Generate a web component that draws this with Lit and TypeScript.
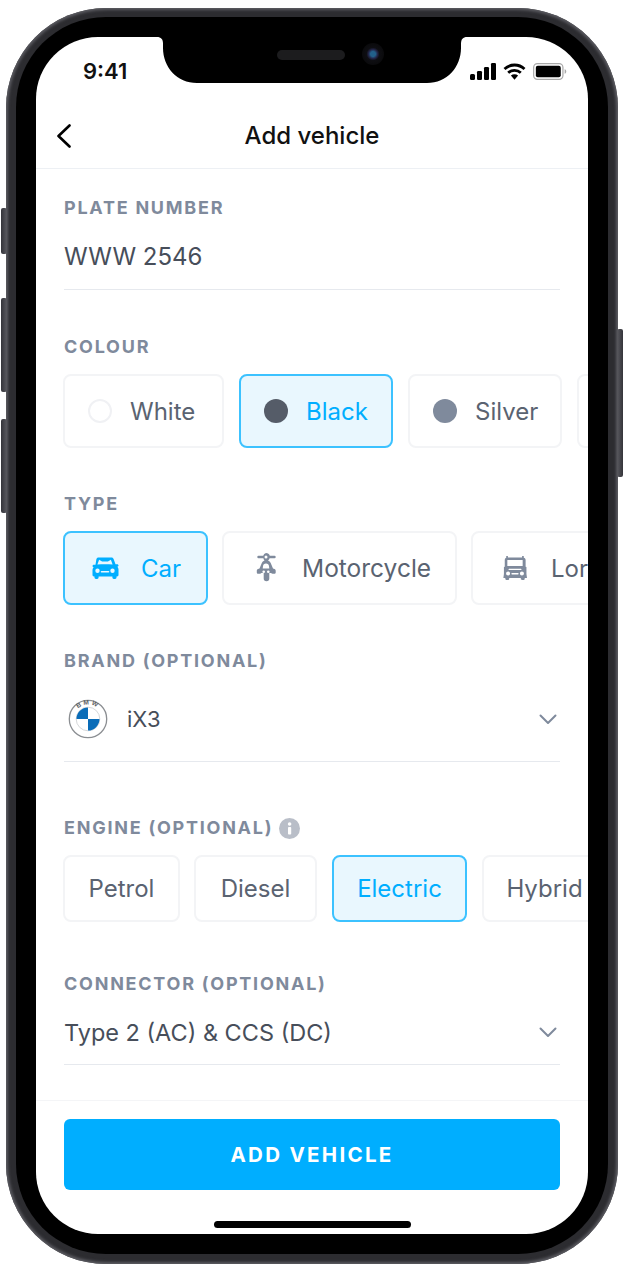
import { LitElement, html, css, svg } from "lit";
import { customElement } from "lit/decorators.js";

const car = svg`<svg class="ic" width="28" height="24" viewBox="0 0 28 24"><path fill="currentColor" fill-rule="evenodd" d="M7.500 1.500h13c1 0 1.800.6 2.100 1.500l1.900 5.300h1.700c.7 0 1.300.6 1.300 1.200s-.5 1.100-1.100 1.200c.7.8 1.100 1.700 1.100 2.800v5.500c0 .8-.6 1.400-1.400 1.400h-.6v1.100c0 .8-.6 1.400-1.400 1.400h-1.300c-.8 0-1.400-.6-1.400-1.400v-1.100H7.600v1.100c0 .8-.6 1.400-1.400 1.400H4.900c-.8 0-1.400-.6-1.400-1.400v-1.100h-.6c-.8 0-1.400-.6-1.400-1.400V14c0-1.100.4-2 1.100-2.800-.6-.1-1.100-.6-1.100-1.200s.6-1.200 1.300-1.200h1.700L5.400 3c.3-.9 1.100-1.500 2.100-1.500Zm.6 2.300L6.400 8.600c2.300-.2 4.900-.3 7.600-.3s5.300.1 7.600.3l-1.700-4.800-3 1.700h-5.800ZM6.500 12.500a2.200 2.200 0 1 0 0 4.400 2.200 2.200 0 0 0 0-4.400Zm15 0a2.200 2.200 0 1 0 0 4.400 2.200 2.200 0 0 0 0-4.400ZM10.500 15a.8.8 0 0 0 0 1.600h7a.8.8 0 0 0 0-1.600h-7Z"/></svg>`;

const moto = svg`<svg class="ic" width="22" height="30" viewBox="0 0 22 30"><path fill="currentColor" fill-rule="evenodd" d="M11 0a4 4 0 0 1 3.800 2.800h4.700a1.200 1.200 0 0 1 0 2.400h-4.900A4 4 0 0 1 13 7.500c1.300.4 2.200 1.300 2.700 2.500l2.300 5.500 1.500.5c.8.300 1.200 1 1.200 1.800v1.700c0 .7-.6 1.300-1.300 1.300h-1.800c-.6 0-1.200-.3-1.500-.8h-1.800v5.500a2.800 2.800 0 0 1-5.600 0v-5.500H6.400c-.3.500-.9.800-1.500.8H3.100c-.7 0-1.300-.6-1.300-1.300V17.800c0-.8.400-1.500 1.200-1.800l1.500-.5L6.800 10c.5-1.200 1.400-2.100 2.700-2.500a4 4 0 0 1-1.100-2.300H3.500a1.200 1.200 0 0 1 0-2.400h4.700A4 4 0 0 1 11 0Zm0 2.500a1.500 1.500 0 1 0 0 3 1.500 1.500 0 0 0 0-3Zm0 8a3 3 0 0 0-3 2.700l-.3 2.300h6.600l-.3-2.300a3 3 0 0 0-3-2.700Zm-2.300 7a1.300 1.300 0 1 0 0 2.600 1.300 1.300 0 0 0 0-2.600Zm4.600 0a1.300 1.300 0 1 0 0 2.600 1.300 1.300 0 0 0 0-2.600Z"/></svg>`;

const lorry = svg`<svg class="ic" width="24" height="24" viewBox="0 0 26 26"><path fill="currentColor" fill-rule="evenodd" d="M3.500 0h1.800v1.700h15.400V0h1.800v1.800c1.200.3 2 1.300 2 2.500v7.400l.9.300v7.500l.6 4.200H23.500v1.300c0 .5-.4 1-1 1h-2.200c-.6 0-1-.5-1-1v-1.300H6.700v1.300c0 .5-.4 1-1 1H3.500c-.6 0-1-.5-1-1v-1.300H.4l.6-4.200V12l.9-.3V4.300c0-1.200.8-2.200 1.600-2.500V0Zm1.200 4.300v6.600h16.600V4.300H4.700ZM7 13.700c-.5 0-1 .5-1 1v.6h14v-.6c0-.5-.5-1-1-1H7ZM5.500 16.800a2.200 2.200 0 1 0 0 4.400 2.200 2.200 0 0 0 0-4.400Zm15 0a2.200 2.200 0 1 0 0 4.400 2.200 2.200 0 0 0 0-4.400ZM9.800 18.500a.7.7 0 0 0 0 1.500h6.400a.7.7 0 0 0 0-1.500H9.800Z"/></svg>`;

const chevron = html`<svg class="chev" width="18" height="11" viewBox="0 0 18 11"><path d="M1.500 1.500 9 9l7.500-7.500" fill="none" stroke="#7f8a9c" stroke-width="2" stroke-linecap="round" stroke-linejoin="round"/></svg>`;

const bmw = svg`<svg class="logo" width="40" height="40" viewBox="0 0 40 40">
  <circle cx="20" cy="20" r="18.700" fill="#fff" stroke="#8b8e92" stroke-width="1.300"/>
  <circle cx="20" cy="20" r="11.800" fill="#fff" stroke="#b9bcc0" stroke-width=".6"/>
  <path d="M20 20V8.500A11.500 11.500 0 0 0 8.500 20H20Zm0 0v11.500A11.500 11.500 0 0 0 31.500 20H20Z" fill="#0a6cb8"/>
  <defs><path id="arc" d="M5.500 20a14.500 14.500 0 0 1 29 0"/></defs>
  <text font-family="Liberation Sans, sans-serif" font-size="6.500" font-weight="700" fill="#5b5f64" text-anchor="middle"><textPath href="#arc" startOffset="50%" letter-spacing="2">BMW</textPath></text>
</svg>`;

@customElement("app-root")
export class AppRoot extends LitElement {
  static styles = css`
    :host { display: block; width: 624px; height: 1272px; background: #fff; font-family: "Inter", "Noto Sans", sans-serif; overflow: hidden; }
    .stage { position: relative; width: 624px; height: 1272px; padding: 8px 6px; box-sizing: border-box; }
    .side { position: absolute; background: linear-gradient(90deg, #34343a, #5a5a60); border-radius: 2px; }
    .s1 { left: 1px; top: 208px; width: 6px; height: 46px; }
    .s2 { left: 1px; top: 298px; width: 6px; height: 94px; }
    .s3 { left: 1px; top: 419px; width: 6px; height: 94px; }
    .s4 { left: 617px; top: 329px; width: 6px; height: 148px; background: linear-gradient(90deg, #5a5a60, #34343a); }
    .metal { position: relative; width: 612px; height: 1256px; box-sizing: border-box; padding: 9px 10px 10px; border-radius: 100px; background: #2c2c30; box-shadow: inset 0 0 3px 2px #5c5c62; }
    .bezel { height: 1237px; box-sizing: border-box; padding: 20px; border-radius: 90px; background: #000; }
    .screen { position: relative; height: 1197px; border-radius: 62px; background: #fff; overflow: hidden; display: flex; flex-direction: column; }
    .notch { position: absolute; left: 121px; top: 0; }
    .speaker { position: absolute; left: 241px; top: 13px; width: 68px; height: 10px; border-radius: 5px; background: #1c1c1e; }
    .cam { position: absolute; left: 326px; top: 6px; width: 22px; height: 22px; border-radius: 50%; background: radial-gradient(circle at 50% 50%, #22608a 0 2.500px, #23264a 4.500px, #0e0e12 6.500px, #0a0a0c 11px); }
    .status { height: 66px; flex: none; box-sizing: border-box; padding: 23px 21px 0 47px; display: flex; justify-content: space-between; align-items: flex-start; }
    .time { font-size: 22px; font-weight: 600; line-height: 23px; color: #111; }
    .sicons { display: flex; align-items: center; gap: 7px; margin-top: 3px; }
    .nav { height: 65px; flex: none; border-bottom: 1px solid #edf0f4; position: relative; display: flex; align-items: center; justify-content: center; }
    .back { position: absolute; left: 20px; top: 21px; }
    .title { font-size: 24px; font-weight: 500; color: #111; line-height: 30px; }
    .body { flex: 1; padding: 27px 28px 0; min-height: 0; overflow: hidden; }
    .label { font-size: 18px; font-weight: 700; letter-spacing: 1.750px; line-height: 22px; padding-top: 1px; margin-bottom: -1px; color: #7f8a9c; display: flex; align-items: center; gap: 6px; }
    .mt45 { margin-top: 45px; } .mt44 { margin-top: 44px; } .mt54 { margin-top: 54px; } .mt50 { margin-top: 50px; }
    .field { display: flex; align-items: center; box-sizing: content-box; border-bottom: 1px solid #e6e9ee; color: #474e5a; font-size: 24px; }
    .plate { height: 66px; padding-top: 5px; }
    .brand { height: 84px; padding-top: 6px; gap: 19px; font-size: 22px; }
    .conn { height: 64px; padding-top: 6px; font-size: 23.500px; }
    .grow { flex: 1; }
    .chev { margin-right: 3px; }
    .logo { margin-left: 4px; }
    .chips { display: flex; gap: 15px; margin: 17px -28px 0 -1px; overflow: hidden; }
    .chips.tight { gap: 14px; }
    .chip { flex: none; box-sizing: border-box; height: 74px; display: flex; align-items: center; border: 2px solid #f3f4f6; border-radius: 8px; background: #fff; color: #5a6371; font-size: 24px; }
    .chip.on { background: #e9f7fe; border-color: #3cc2ff; color: #00aeff; }
    .dot { width: 24px; height: 24px; border-radius: 50%; flex: none; box-sizing: border-box; margin-right: 18px; }
    .d-white { border: 2px solid #f0f1f4; }
    .d-black { background: #555c68; }
    .d-silver { background: #7f8a9c; }
    .col { padding-left: 23px; }
    .w161 { width: 161px; } .w154 { width: 154px; } .w145 { width: 145px; } .w235 { width: 235px; } .w200 { width: 200px; }
    .ic { color: #7f8a9c; flex: none; }
    .on .ic { color: #00aeff; }
    .t-car { padding-left: 26px; gap: 22px; }
    .t-moto { padding-left: 31px; gap: 25px; font-size: 24.500px; }
    .t-lorry { padding-left: 30px; gap: 24px; }
    .eng { height: 67px; justify-content: center; }
    .e1 { width: 117px; margin-right: -1px; } .e2 { width: 123px; } .e3 { width: 135px; } .e4 { width: 125px; }
    .info { width: 21px; height: 21px; flex: none; }
    .footer { flex: none; height: 134px; box-sizing: border-box; border-top: 1px solid #f4f5f7; padding: 18px 28px 0; display: flex; flex-direction: column; align-items: center; }
    .cta { width: 100%; height: 71px; flex: none; border: none; border-radius: 6px; background: #00aeff; color: #fff; font: 700 20.500px "Inter", sans-serif; letter-spacing: 2.300px; }
    .home { width: 197px; height: 7px; flex: none; margin-top: 31px; border-radius: 4px; background: #000; }
  `;

  render() {
    return html`<div class="stage">
      <div class="side s1"></div><div class="side s2"></div><div class="side s3"></div><div class="side s4"></div>
      <div class="metal"><div class="bezel"><div class="screen">
        <div class="status">
          <span class="time">9:41</span>
          <span class="sicons">
            <svg width="26" height="17" viewBox="0 0 26 17"><g fill="#000"><rect x="0" y="11" width="5" height="6" rx="1.500"/><rect x="7" y="8" width="5" height="9" rx="1.200"/><rect x="14" y="4" width="5" height="13" rx="1.200"/><rect x="21" y="0" width="5" height="17" rx="1.200"/></g></svg>
            <svg width="23" height="17" viewBox="0 0 23 17"><g fill="none" stroke="#000" stroke-width="2.800"><path d="M1.500 6a14.500 14.500 0 0 1 20 0"/><path d="M5.200 9.800a9.200 9.200 0 0 1 12.600 0"/></g><path d="M7.900 12.600a5.200 5.200 0 0 1 7.200 0l-3.600 4.200Z" fill="#000"/></svg>
            <svg width="34" height="17" viewBox="0 0 36 18"><rect x=".7" y=".7" width="31" height="16.600" rx="4" fill="none" stroke="#a9a9a9" stroke-width="1.300"/><rect x="3" y="3" width="26.400" height="12" rx="2" fill="#000"/><path d="M33.500 6.500v5c1-.3 1.700-1.300 1.700-2.500s-.7-2.200-1.700-2.500Z" fill="#a9a9a9"/></svg>
          </span>
        </div>
        <div class="nav">
          <svg class="back" width="16" height="24" viewBox="0 0 16 24"><path d="M13.500 1.500 2.500 12l11 10.500" fill="none" stroke="#000" stroke-width="2.600" stroke-linecap="round" stroke-linejoin="round"/></svg>
          <span class="title">Add vehicle</span>
        </div>
        <div class="body">
          <div class="label">PLATE NUMBER</div>
          <div class="field plate">WWW 2546</div>

          <div class="label mt45">COLOUR</div>
          <div class="chips">
            <div class="chip col w161"><span class="dot d-white"></span>White</div>
            <div class="chip col w154 on"><span class="dot d-black"></span>Black</div>
            <div class="chip col w154"><span class="dot d-silver"></span>Silver</div>
            <div class="chip col w154"></div>
          </div>

          <div class="label mt44">TYPE</div>
          <div class="chips tight">
            <div class="chip t-car w145 on">${car}Car</div>
            <div class="chip t-moto w235">${moto}Motorcycle</div>
            <div class="chip t-lorry w200">${lorry}Lorry</div>
          </div>

          <div class="label mt44">BRAND (OPTIONAL)</div>
          <div class="field brand">${bmw}<span class="grow">iX3</span>${chevron}</div>

          <div class="label mt54">ENGINE (OPTIONAL)
            <svg class="info" viewBox="0 0 21 21"><circle cx="10.500" cy="10.500" r="10.500" fill="#b9bec8"/><rect x="9" y="9" width="3.200" height="7.500" rx=".8" fill="#fff"/><circle cx="10.600" cy="6" r="1.800" fill="#fff"/></svg>
          </div>
          <div class="chips">
            <div class="chip eng e1">Petrol</div>
            <div class="chip eng e2">Diesel</div>
            <div class="chip eng e3 on">Electric</div>
            <div class="chip eng e4">Hybrid</div>
          </div>

          <div class="label mt50">CONNECTOR (OPTIONAL)</div>
          <div class="field conn"><span class="grow">Type 2 (AC) &amp; CCS (DC)</span>${chevron}</div>
        </div>
        <div class="footer">
          <button class="cta">ADD VEHICLE</button>
          <div class="home"></div>
        </div>
        <svg class="notch" width="310" height="46" viewBox="0 0 310 46"><path d="M0 0h310c-4 0-6 2-6 7v4c0 19-14 35-34 35H40C20 46 6 30 6 11V7C6 2 4 0 0 0Z" fill="#000"/></svg>
        <div class="speaker"></div>
        <div class="cam"></div>
      </div></div></div>
    </div>`;
  }
}
